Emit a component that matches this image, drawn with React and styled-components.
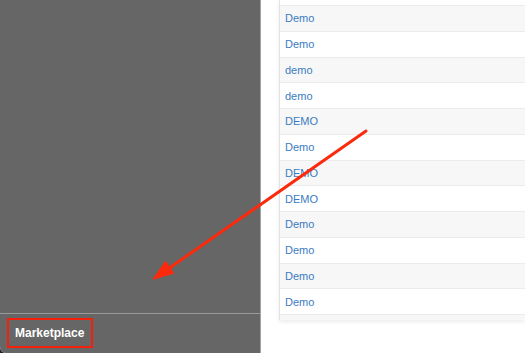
import React from "react";
import styled, { createGlobalStyle } from "styled-components";

const GlobalStyle = createGlobalStyle`
  html, body {
    margin: 0;
    padding: 0;
    background: #2a2130;
    font-family: "Liberation Sans", Arial, sans-serif;
  }
`;

const rows = [
  "",
  "Demo",
  "Demo",
  "demo",
  "demo",
  "DEMO",
  "Demo",
  "DEMO",
  "DEMO",
  "Demo",
  "Demo",
  "Demo",
  "Demo",
  "",
];

const App = () => {
  return (
    <>
      <GlobalStyle />
      <Frame>
        <Sidebar>
          <SidebarBody />
          <SidebarFooter>
            <MarketItem>Marketplace</MarketItem>
          </SidebarFooter>
        </Sidebar>
        <Main>
          <TableViewport>
            <Table>
              {rows.map((label, i) => (
                <Row key={i}>
                  <RowLink>{label}</RowLink>
                </Row>
              ))}
            </Table>
          </TableViewport>
        </Main>
        <Arrow viewBox="0 0 525 353" width="525" height="353">
          <line
            x1="366"
            y1="131"
            x2="168"
            y2="269"
            stroke="#fb2a0c"
            strokeWidth="3"
            strokeLinecap="round"
          />
          <polygon points="152,280 174.5,273.5 165.5,260.5" fill="#fb2a0c" />
        </Arrow>
      </Frame>
    </>
  );
};

const Frame = styled.div`
  position: relative;
  display: flex;
  width: 525px;
  height: 353px;
  background: #fff;
  border-bottom-left-radius: 6px;
  overflow: hidden;
`;

const Sidebar = styled.aside`
  width: 260px;
  flex-shrink: 0;
  display: flex;
  flex-direction: column;
  background: #666666;
  border-right: 1px solid #a3a3a3;
`;

const SidebarBody = styled.div`
  flex: 1;
`;

const SidebarFooter = styled.div`
  height: 40px;
  border-top: 1px solid #9a9a9a;
  padding: 4px 0 0 7px;
  box-sizing: border-box;
`;

const MarketItem = styled.div`
  display: inline-flex;
  align-items: center;
  height: 30px;
  box-sizing: border-box;
  padding: 0 7px 0 6px;
  border: 2.5px solid #f5200c;
  color: #fff;
  font-size: 12px;
  font-weight: bold;
`;

const Main = styled.main`
  flex: 1;
  padding-left: 18px;
  background: #fff;
`;

const TableViewport = styled.div`
  height: 320px;
  overflow: hidden;
  border-left: 1px solid #e3e3e3;
  box-shadow: 0 2px 4px rgba(0, 0, 0, 0.08);
`;

const Table = styled.div`
  margin-top: -20.75px;
`;

const Row = styled.div`
  height: 25.75px;
  box-sizing: border-box;
  display: flex;
  align-items: center;
  padding-left: 5px;
  border-top: 1px solid #ebebeb;
  background: #fff;

  &:nth-child(even) {
    background: #f7f7f7;
  }
`;

const RowLink = styled.a`
  color: #3a7bc0;
  font-size: 11px;
  cursor: pointer;
`;

const Arrow = styled.svg`
  position: absolute;
  left: 0;
  top: 0;
  pointer-events: none;
`;

export default App;
